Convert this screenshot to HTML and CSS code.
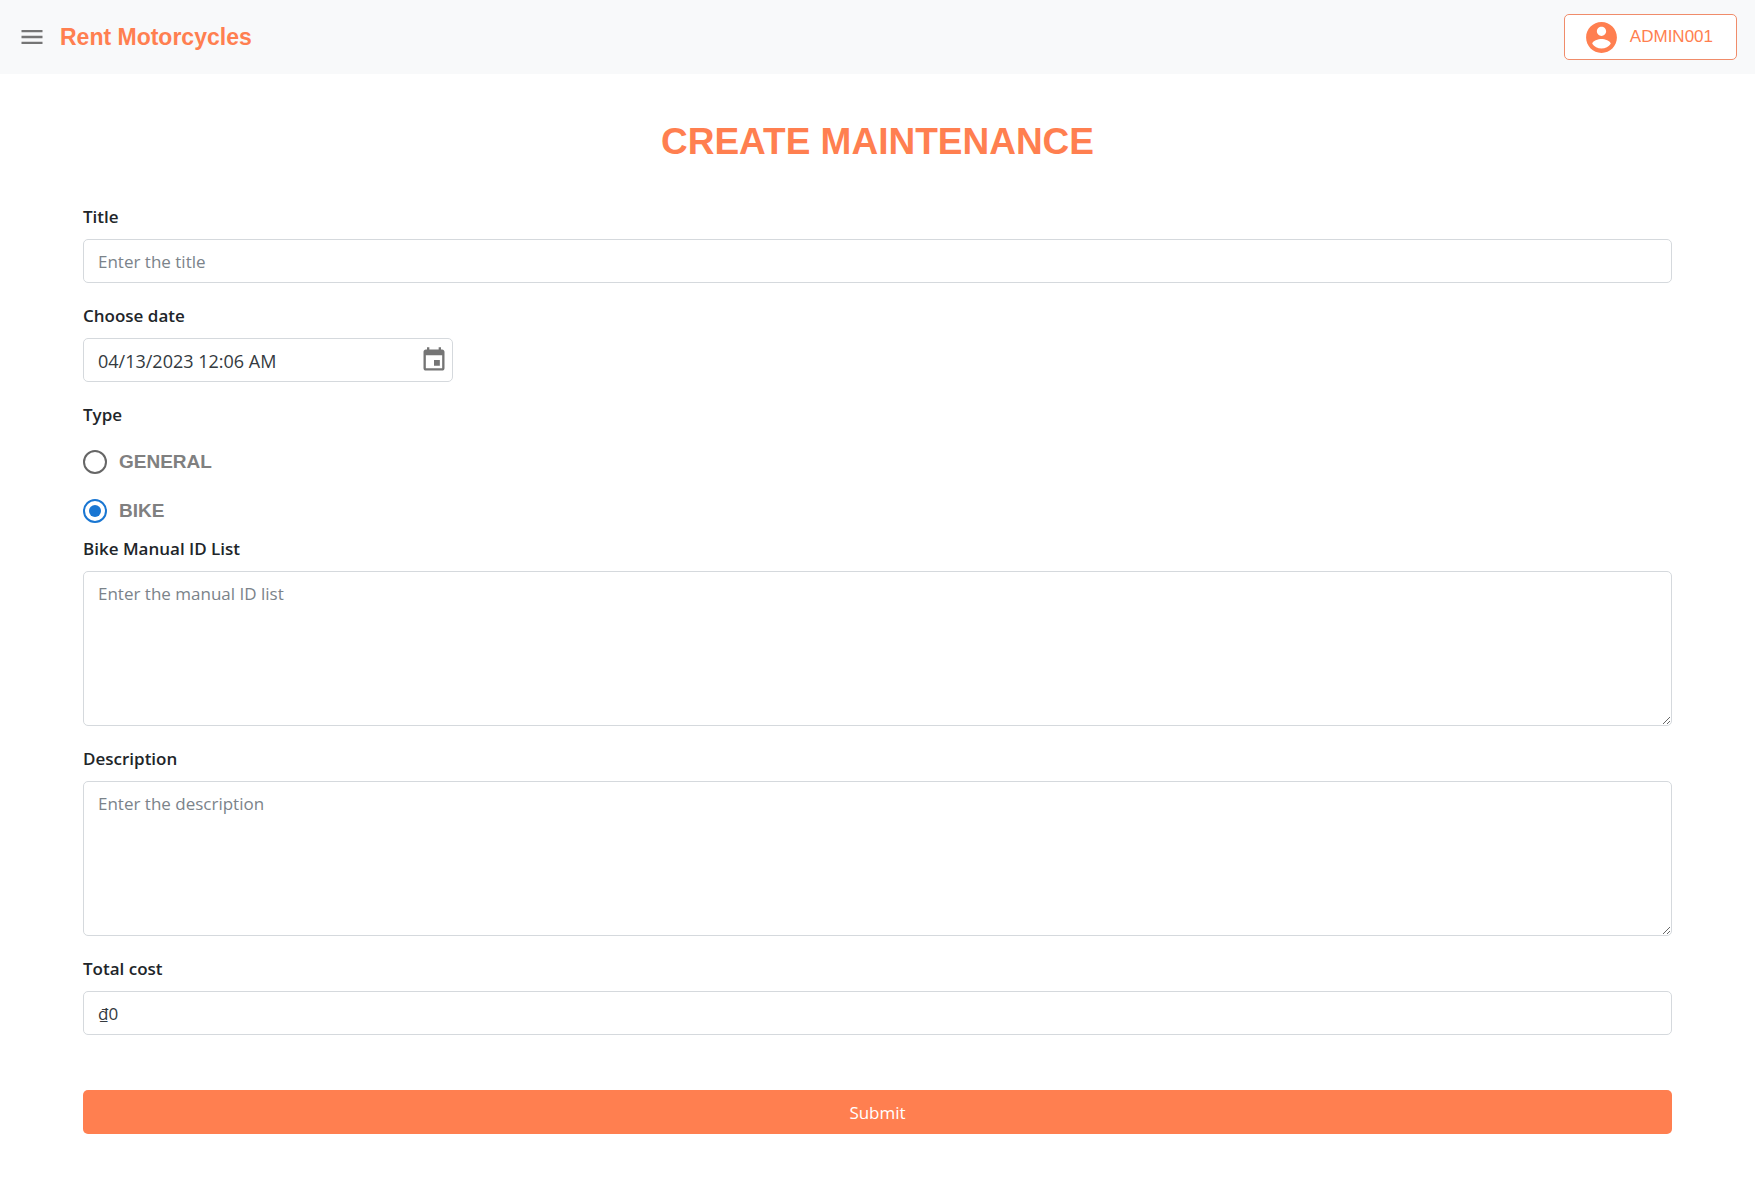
FILE: index.html
```html
<!DOCTYPE html>
<html lang="en">
<head>
<meta charset="utf-8">
<meta name="viewport" content="width=device-width, initial-scale=1">
<title>Create Maintenance - Rent Motorcycles</title>
<link rel="stylesheet" href="styles.css">
</head>
<body>
<header class="topbar">
  <button class="icon-button" type="button" aria-label="Open menu">
    <svg class="icon" viewBox="0 0 24 24" aria-hidden="true"><path d="M3 18h18v-2H3v2zm0-5h18v-2H3v2zm0-7v2h18V6H3z"/></svg>
  </button>
  <a class="brand" href="#">Rent Motorcycles</a>
  <button class="account" type="button">
    <svg class="account-icon" viewBox="0 0 24 24" aria-hidden="true"><path d="M12 2C6.480 2 2 6.480 2 12s4.480 10 10 10 10-4.480 10-10S17.520 2 12 2zm0 3c1.660 0 3 1.340 3 3s-1.340 3-3 3-3-1.340-3-3 1.340-3 3-3zm0 14.200c-2.500 0-4.710-1.280-6-3.220.030-1.990 4-3.080 6-3.080 1.990 0 5.970 1.090 6 3.080-1.290 1.940-3.500 3.220-6 3.220z"/></svg>
    <span>ADMIN001</span>
  </button>
</header>
<main class="page">
  <h1 class="page-title">CREATE MAINTENANCE</h1>
  <form class="form">
    <div class="field">
      <label class="label" for="title">Title</label>
      <input class="control" id="title" type="text" placeholder="Enter the title">
    </div>
    <div class="field">
      <label class="label" for="date">Choose date</label>
      <div class="date-control">
        <input class="date-input" id="date" type="text" value="04/13/2023 12:06 AM">
        <button class="icon-button" type="button" aria-label="Choose date">
          <svg class="icon" viewBox="0 0 24 24" aria-hidden="true"><path d="M17 12h-5v5h5v-5zM16 1v2H8V1H6v2H5c-1.110 0-1.990.900-1.990 2L3 19c0 1.100.890 2 2 2h14c1.100 0 2-.900 2-2V5c0-1.100-.900-2-2-2h-1V1h-2zm3 18H5V8h14v11z"/></svg>
        </button>
      </div>
    </div>
    <fieldset class="choices">
      <legend class="label">Type</legend>
      <label class="choice"><input class="radio" type="radio" name="type" value="general">GENERAL</label>
      <label class="choice"><input class="radio" type="radio" name="type" value="bike" checked>BIKE</label>
    </fieldset>
    <div class="field">
      <label class="label" for="bikes">Bike Manual ID List</label>
      <textarea class="control text-area" id="bikes" placeholder="Enter the manual ID list"></textarea>
    </div>
    <div class="field">
      <label class="label" for="description">Description</label>
      <textarea class="control text-area" id="description" placeholder="Enter the description"></textarea>
    </div>
    <div class="field">
      <label class="label" for="cost">Total cost</label>
      <input class="control" id="cost" type="text" value="₫0">
    </div>
    <button class="submit" type="submit">Submit</button>
  </form>
</main>
</body>
</html>
```
FILE: styles.css
```css
* {
  box-sizing: border-box;
}

body {
  margin: 0;
  background: #fff;
  color: #212529;
  font: 17px/28px "Open Sans", "Noto Sans", sans-serif;
}

button,
input,
textarea {
  font: inherit;
  color: inherit;
}

button {
  cursor: pointer;
}

.topbar {
  display: flex;
  align-items: center;
  padding: 14px 18px;
  background: #f8f9fa;
  font-family: "Liberation Sans", Arial, sans-serif;
}

.icon-button {
  display: flex;
  padding: 0;
  border: 0;
  background: none;
  color: #757575;
}

.icon {
  width: 28px;
  height: 28px;
  fill: currentColor;
}

.brand {
  margin-left: 14px;
  color: #ff7f50;
  font-size: 23px;
  font-weight: 700;
  text-decoration: none;
}

.account {
  display: flex;
  align-items: center;
  gap: 10px;
  height: 46px;
  margin-left: auto;
  padding: 0 23px 0 18px;
  border: 1px solid #f08c6a;
  border-radius: 5px;
  background: #fff;
  color: #ff7f50;
  font-size: 17px;
}

.account-icon {
  width: 37px;
  height: 37px;
  fill: currentColor;
}

.page {
  padding: 45px 83px 62px;
}

.page-title {
  margin: 0 0 38px;
  color: #ff7f50;
  font: 700 37px/46px "Liberation Sans", Arial, sans-serif;
  text-align: center;
}

.form {
  display: flex;
  flex-direction: column;
}

.field {
  display: flex;
  flex-direction: column;
  gap: 8px;
  margin-bottom: 19px;
}

.label {
  padding: 0;
  font-weight: 600;
}

.control,
.date-control {
  width: 100%;
  min-height: 44px;
  padding: 8px 14px 6px;
  border: 1px solid #d5d9dd;
  border-radius: 5px;
  background: #fff;
  color: #343a40;
  outline: none;
}

.control::placeholder {
  color: #7b838a;
  opacity: 1;
}

.date-control {
  display: flex;
  align-items: center;
  max-width: 370px;
  padding: 0 4px 0 14px;
}

.date-input {
  flex: 1;
  min-width: 0;
  padding: 2px 0 0;
  border: 0;
  background: none;
  font-size: 18px;
  outline: none;
}

.text-area {
  height: 155px;
  resize: vertical;
}

.choices {
  margin: 0;
  padding: 0;
  border: 0;
}

.choices .label {
  margin-bottom: 8px;
}

.choice {
  display: flex;
  align-items: center;
  gap: 12px;
  height: 49px;
  color: #808080;
  font-family: "Liberation Sans", Arial, sans-serif;
  font-size: 19px;
  font-weight: 700;
}

.radio {
  display: grid;
  place-content: center;
  width: 24px;
  height: 24px;
  margin: 0;
  border: 2px solid #666;
  border-radius: 50%;
  appearance: none;
}

.radio:checked {
  border-color: #1976d2;
}

.radio:checked::before {
  width: 12px;
  height: 12px;
  border-radius: 50%;
  background: #1976d2;
  content: "";
}

.submit {
  height: 44px;
  margin-top: 36px;
  padding: 2px 0 0;
  border: 0;
  border-radius: 5px;
  background: #ff7f50;
  color: #fff;
}
```
